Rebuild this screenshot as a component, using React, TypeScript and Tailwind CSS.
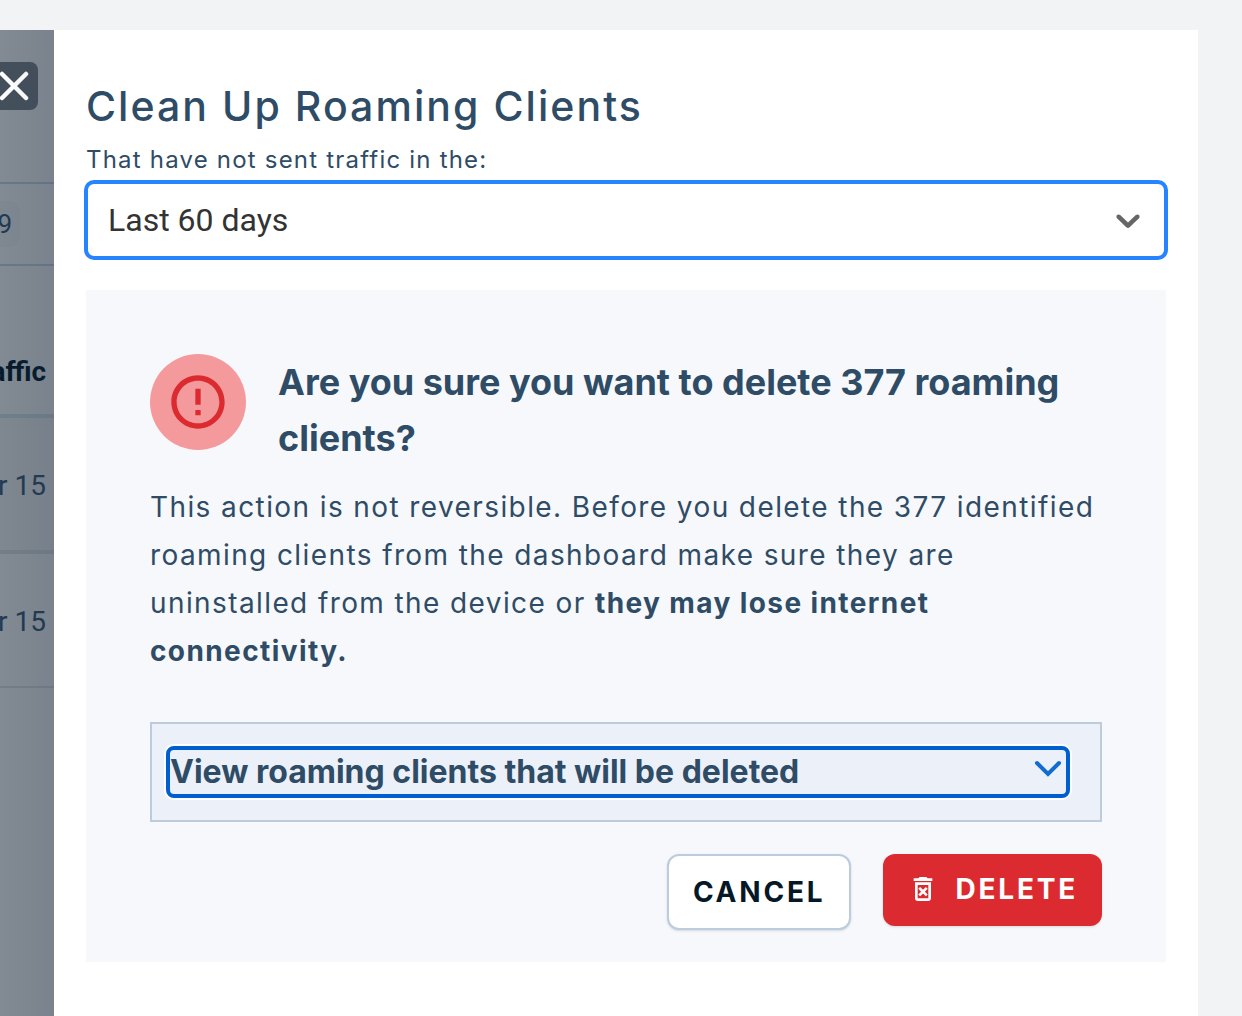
import { useState } from "react";
import { MdErrorOutline, MdOutlineDeleteForever } from "react-icons/md";

function BackgroundPage() {
  return (
    <div className="relative w-[54px] shrink-0 overflow-hidden bg-[#828a93] font-[Roboto,sans-serif] text-[28px] leading-8 text-[#1f3a52]">
      <div className="flex h-[152px] items-start pt-8">
        <button
          type="button"
          aria-label="Close"
          className="flex h-12 w-[38px] shrink-0 items-center rounded-r-lg bg-[#434f5b] text-white"
        >
          <svg viewBox="0 0 30 30" className="h-[30px] w-[30px]" fill="none" stroke="currentColor" strokeWidth="4.5" strokeLinecap="round">
            <path d="M2 3L26 27M26 3L2 27" />
          </svg>
        </button>
      </div>
      <div className="flex h-[84px] items-center border-y-2 border-[#667a8a]">
        <span className="flex h-[46px] w-5 items-center justify-end rounded-r-xl bg-[#7f8791] pr-2 text-[26px]">9</span>
      </div>
      <div className="flex h-[152px] items-end justify-end border-b-4 border-[#717e8b] pr-2 pb-[26px] font-bold text-[#051b2c]">
        <span>affic</span>
      </div>
      <div className="flex h-[136px] items-center justify-end border-b-4 border-[#737e88] bg-[#7f8790] pt-1 pr-2 whitespace-nowrap">r 15</div>
      <div className="flex h-[134px] items-center justify-end border-b-2 border-[#737e88] pt-1 pr-2 whitespace-nowrap">r 15</div>
      <div className="absolute inset-0 bg-linear-to-r from-transparent to-slate-700/10" />
    </div>
  );
}

function ConfirmationPanel() {
  const [open, setOpen] = useState(false);
  return (
    <section className="mt-[30px] bg-[#f7f8fc] px-16 pt-16 pb-8">
      <div className="flex gap-8">
        <div className="flex size-24 shrink-0 items-center justify-center rounded-full bg-[#f49a9c] text-[#dc2b30]">
          <MdErrorOutline className="size-16" />
        </div>
        <h2 className="text-4xl leading-[56px] font-bold">
          Are you sure you want to delete 377 roaming clients?
        </h2>
      </div>
      <p className="mt-[17px] text-[28px] leading-[48px] tracking-wider">
        This action is not reversible. Before you delete the 377 identified roaming clients from the dashboard make
        sure they are uninstalled from the device or <strong className="font-bold">they may lose internet connectivity.</strong>
      </p>
      <div className="mt-[47px] border-2 border-[#bccbdd] bg-[#ecf0f9] py-[22px] pr-[30px] pl-[14px]">
        <button
          type="button"
          aria-expanded={open}
          onClick={() => setOpen(!open)}
          className="flex h-[52px] w-full items-center justify-between rounded-lg border-4 border-[#005fd0] pr-1 text-left text-[32px] leading-[44px] font-bold ring-2 ring-white"
        >
          <span>View roaming clients that will be deleted</span>
          <svg viewBox="0 0 28 28" className="size-7 text-[#116dd0]" fill="none" stroke="currentColor" strokeWidth="4" strokeLinecap="round">
            <path d="M3 5L14 16L25 5" />
          </svg>
        </button>
      </div>
      <div className="mt-8 flex items-start justify-end gap-8 text-[28px] leading-10 font-bold tracking-widest">
        <button type="button" className="rounded-xl border-2 border-[#bccbdd] bg-white px-6 py-4 text-[#051827] shadow-sm">
          CANCEL
        </button>
        <button type="button" className="flex items-center gap-4 rounded-xl bg-[#dc2b30] px-6 pt-[15px] pb-[17px] text-white shadow-sm">
          <MdOutlineDeleteForever className="size-8" />
          DELETE
        </button>
      </div>
    </section>
  );
}

export default function App() {
  return (
    <div className="flex min-h-screen bg-[#f2f3f5] pt-[30px] pr-11 font-[Inter,sans-serif] text-[#2f4c66]">
      <BackgroundPage />
      <main className="min-w-0 flex-1 bg-white px-8 pt-[52px] pb-[54px]">
        <h1 className="text-[41px] leading-[48px] font-medium tracking-wider">Clean Up Roaming Clients</h1>
        <label htmlFor="period" className="mt-4 block text-2xl leading-7 tracking-wider">
          That have not sent traffic in the:
        </label>
        <div className="relative -mx-0.5 mt-[6px]">
          <select
            id="period"
            defaultValue="60"
            className="block h-20 w-full appearance-none rounded-[10px] border-4 border-[#2684ff] bg-white px-5 font-[Roboto,sans-serif] text-[32px] text-[#333333] outline-none"
          >
            <option value="60">Last 60 days</option>
          </select>
          <svg viewBox="0 0 20 20" className="pointer-events-none absolute top-5 right-5 size-10 text-[#666666]" fill="currentColor" aria-hidden="true">
            <path d="M4.516 7.548c0.436-0.446 1.043-0.481 1.576 0l3.908 3.747 3.908-3.747c0.533-0.481 1.141-0.446 1.574 0 0.436 0.445 0.408 1.197 0 1.615-0.406 0.418-4.695 4.502-4.695 4.502-0.217 0.223-0.502 0.335-0.787 0.335s-0.57-0.112-0.789-0.335c0 0-4.287-4.084-4.695-4.502s-0.436-1.17 0-1.615z" />
          </svg>
        </div>
        <ConfirmationPanel />
      </main>
    </div>
  );
}
